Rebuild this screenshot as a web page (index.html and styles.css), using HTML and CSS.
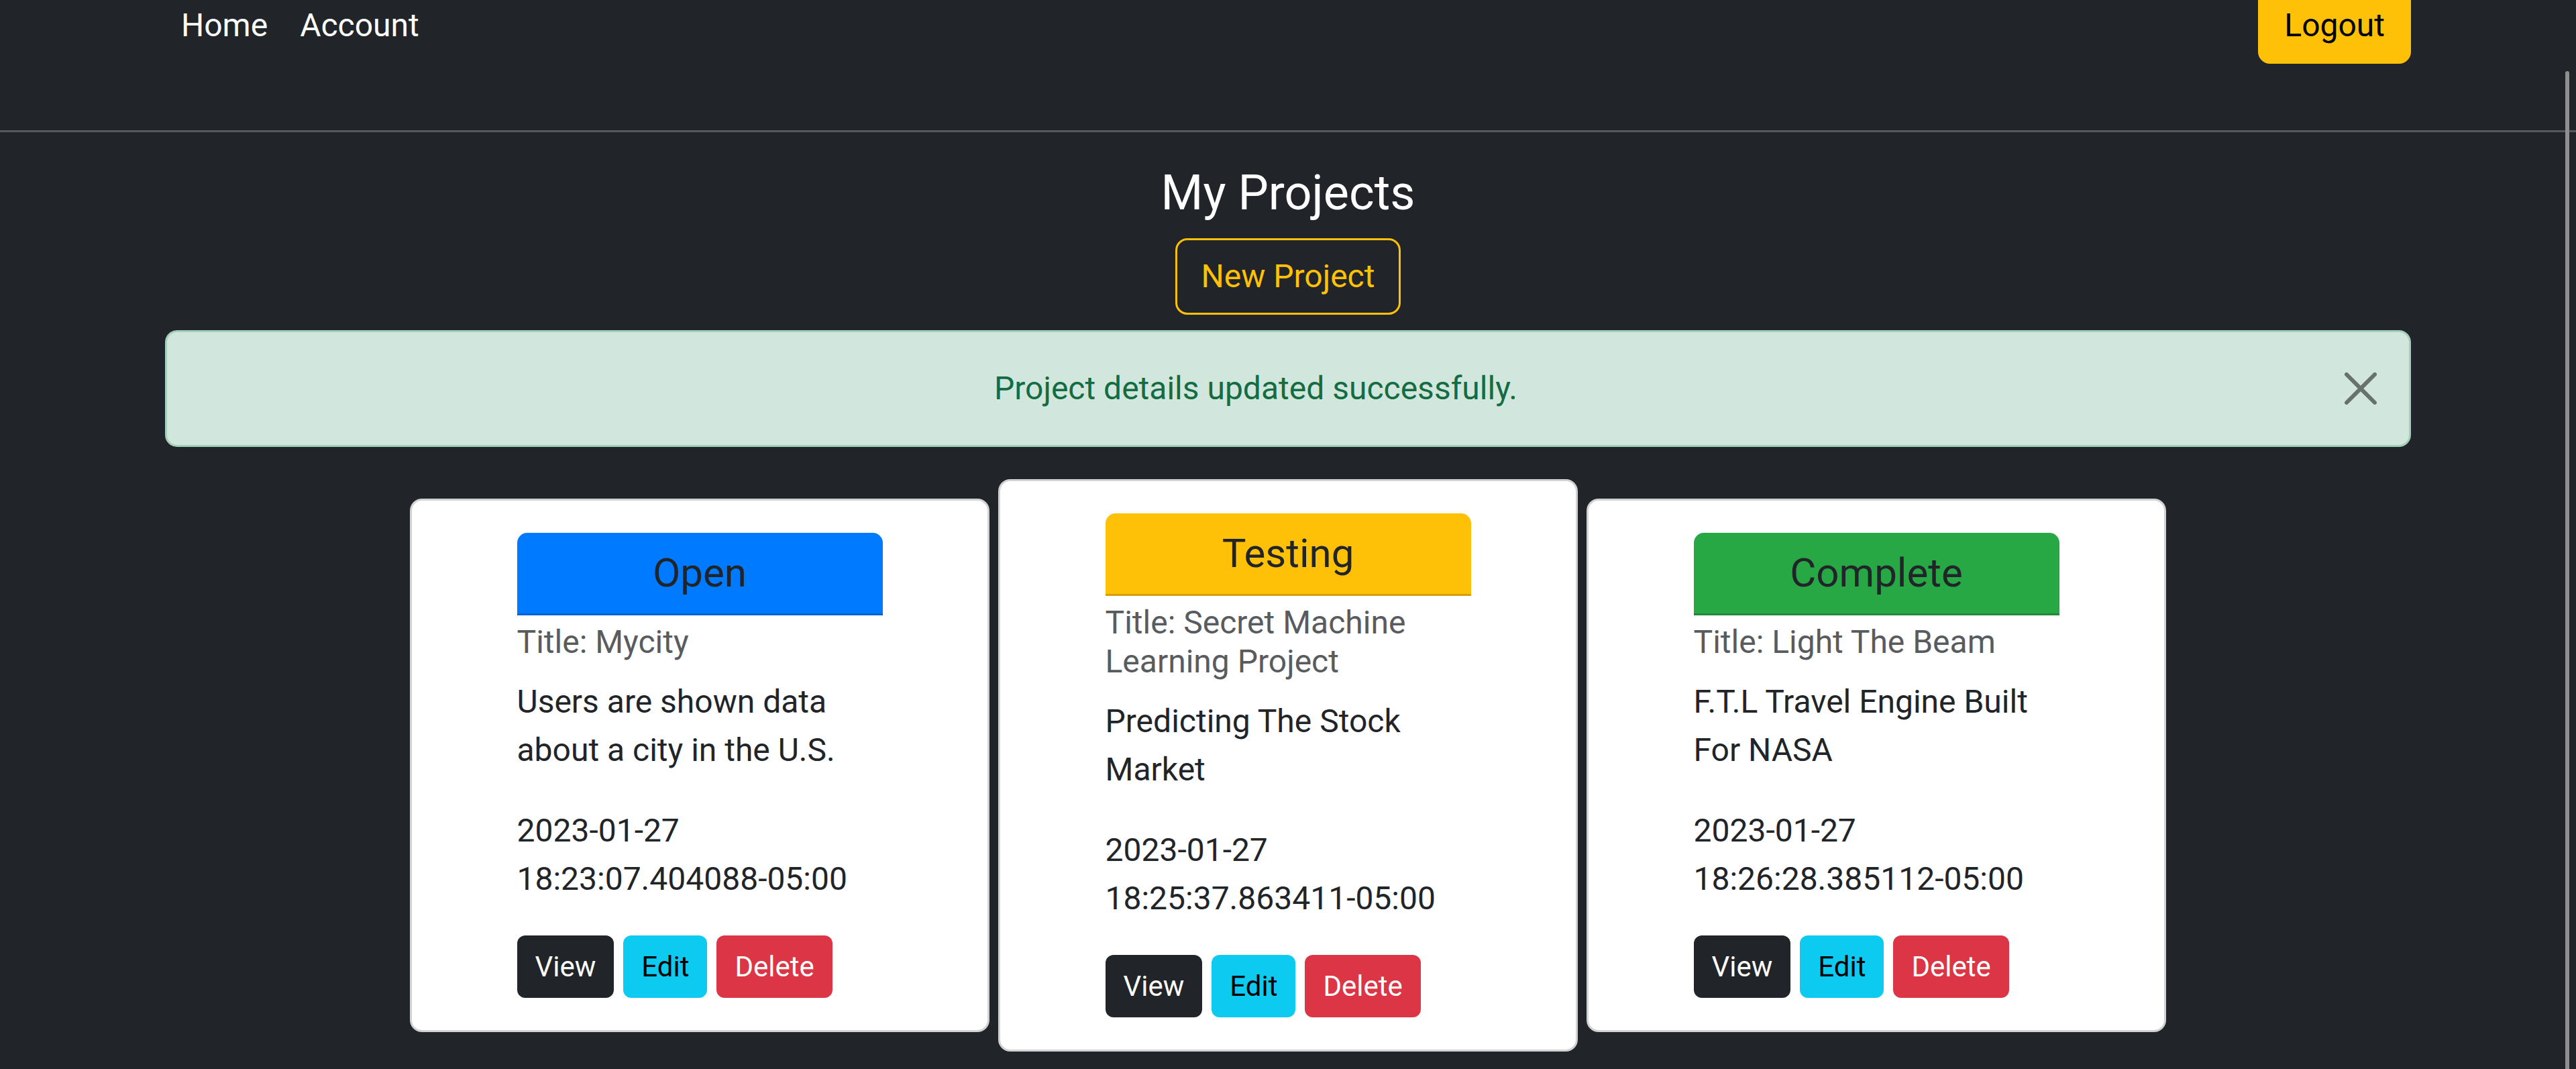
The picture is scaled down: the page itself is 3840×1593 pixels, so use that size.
FILE: index.html
```html
<!DOCTYPE html>
<html lang="en">
<head>
<meta charset="utf-8">
<title>My Projects</title>
<link rel="stylesheet" href="styles.css">
</head>
<body>
<div class="page">
  <nav class="navbar">
    <div class="nav-inner">
      <ul class="nav-links">
        <li><a class="nav-link" href="#">Home</a></li>
        <li><a class="nav-link" href="#">Account</a></li>
      </ul>
      <a class="btn btn-warning" href="#">Logout</a>
    </div>
  </nav>
  <hr class="divider">
  <main class="container">
    <h4 class="page-title">My Projects</h4>
    <div class="center"><a class="btn btn-outline-warning" href="#">New Project</a></div>
    <div class="alert" role="alert">
      Project details updated successfully.
      <button class="btn-close" type="button" aria-label="Close">
        <svg viewBox="0 0 16 16" width="48" height="48"><path d="M.293.293a1 1 0 0 1 1.414 0L8 6.586 14.293.293a1 1 0 1 1 1.414 1.414L9.414 8l6.293 6.293a1 1 0 0 1-1.414 1.414L8 9.414l-6.293 6.293a1 1 0 0 1-1.414-1.414L6.586 8 .293 1.707a1 1 0 0 1 0-1.414z"/></svg>
      </button>
    </div>
    <div class="cards">
      <div class="card">
        <div class="card-content">
          <div class="status status-open">Open</div>
          <h6 class="card-subtitle">Title: Mycity</h6>
          <p class="card-text">Users are shown data about a city in the U.S.</p>
          <p class="card-text">2023-01-27 18:23:07.404088-05:00</p>
          <div class="actions">
            <a class="btn-sm btn-dark" href="#">View</a>
            <a class="btn-sm btn-info" href="#">Edit</a>
            <a class="btn-sm btn-danger" href="#">Delete</a>
          </div>
        </div>
      </div>
      <div class="card">
        <div class="card-content">
          <div class="status status-testing">Testing</div>
          <h6 class="card-subtitle">Title: Secret Machine Learning Project</h6>
          <p class="card-text">Predicting The Stock Market</p>
          <p class="card-text">2023-01-27 18:25:37.863411-05:00</p>
          <div class="actions">
            <a class="btn-sm btn-dark" href="#">View</a>
            <a class="btn-sm btn-info" href="#">Edit</a>
            <a class="btn-sm btn-danger" href="#">Delete</a>
          </div>
        </div>
      </div>
      <div class="card">
        <div class="card-content">
          <div class="status status-complete">Complete</div>
          <h6 class="card-subtitle">Title: Light The Beam</h6>
          <p class="card-text">F.T.L Travel Engine Built For NASA</p>
          <p class="card-text">2023-01-27 18:26:28.385112-05:00</p>
          <div class="actions">
            <a class="btn-sm btn-dark" href="#">View</a>
            <a class="btn-sm btn-info" href="#">Edit</a>
            <a class="btn-sm btn-danger" href="#">Delete</a>
          </div>
        </div>
      </div>
    </div>
  </main>
</div>
<div class="scroll-thumb"></div>
</body>
</html>
```

FILE: styles.css
```css
html, body {
  margin: 0;
  padding: 0;
  height: 100%;
  overflow: hidden;
  background: #212529;
}

body {
  font-family: "Segoe UI", Roboto, "Liberation Sans", sans-serif;
  font-size: 48px;
  line-height: 1.5;
  color: #fff;
}

*, *::before, *::after {
  box-sizing: border-box;
}

.page {
  margin-top: -46px;
}

/* Navbar */
.navbar {
  padding: 24px 0;
}

.nav-inner {
  width: 3420px;
  margin: 0 auto;
  padding: 0 36px;
  display: flex;
  align-items: center;
  justify-content: space-between;
}

.nav-links {
  display: flex;
  list-style: none;
  margin: 0;
  padding: 0;
}

.nav-link {
  display: block;
  padding: 24px;
  line-height: 72px;
  color: #fff;
  text-decoration: none;
}

.btn {
  display: inline-block;
  padding: 18px 36px;
  border: 3px solid transparent;
  border-radius: 18px;
  font-size: 48px;
  line-height: 72px;
  text-decoration: none;
  text-align: center;
}

.btn-warning {
  background: #ffc107;
  border-color: #ffc107;
  color: #000;
}

.btn-outline-warning {
  background: transparent;
  border-color: #ffc107;
  color: #ffc107;
}

.divider {
  margin: 72px 0 48px;
  border: 0;
  border-top: 3px solid rgba(255, 255, 255, 0.25);
  height: 0;
}

/* Main */
.container {
  width: 3420px;
  margin: 0 auto;
  padding: 0 36px;
}

.page-title {
  margin: 0 0 24px;
  font-size: 72px;
  line-height: 1.2;
  font-weight: 400;
  text-align: center;
}

.center {
  text-align: center;
}

.alert {
  position: relative;
  margin: 23px 0 48px;
  padding: 48px 144px 48px 48px;
  background: #d1e7dd;
  border: 3px solid #a3cfbb;
  border-radius: 18px;
  color: #146c43;
  text-align: center;
  line-height: 72px;
}

.btn-close {
  position: absolute;
  top: 0;
  right: 0;
  box-sizing: content-box;
  width: 48px;
  height: 48px;
  padding: 60px 48px;
  border: 0;
  background: transparent;
  opacity: 0.5;
  cursor: pointer;
}

.btn-close svg {
  display: block;
  fill: #000;
}

/* Cards */
.cards {
  display: flex;
  justify-content: center;
  align-items: center;
  gap: 13px;
}

.card {
  width: 864px;
  padding: 48px;
  background: #fff;
  border: 3px solid rgba(0, 0, 0, 0.175);
  border-radius: 18px;
  color: #212529;
}

.card-content {
  width: 545px;
  margin: 0 auto;
}

.status {
  margin-bottom: 11px;
  padding: 24px 48px;
  border-bottom: 3px solid rgba(0, 0, 0, 0.175);
  border-radius: 15px 15px 0 0;
  font-size: 60px;
  line-height: 72px;
  text-align: center;
  color: #212529;
}

.status-open {
  background: #007bff;
}

.status-testing {
  background: #ffc107;
}

.status-complete {
  background: #28a745;
}

.card-subtitle {
  margin: 0 0 24px;
  font-size: 48px;
  line-height: 1.2;
  font-weight: 400;
  color: #595c5f;
}

.card-text {
  margin: 0 0 48px;
  line-height: 72px;
}

.actions {
  display: flex;
  gap: 14px;
}

.btn-sm {
  display: inline-block;
  padding: 12px 24px;
  border: 3px solid transparent;
  border-radius: 12px;
  font-size: 42px;
  line-height: 63px;
  text-decoration: none;
}

.btn-dark {
  background: #212529;
  color: #fff;
}

.btn-info {
  background: #0dcaf0;
  color: #000;
}

.btn-danger {
  background: #dc3545;
  color: #fff;
}

/* Overlay scrollbar thumb */
.scroll-thumb {
  position: fixed;
  top: 106px;
  right: 10px;
  bottom: 0;
  width: 6px;
  border-radius: 3px 3px 0 0;
  background: #8f8f8f;
}
```
